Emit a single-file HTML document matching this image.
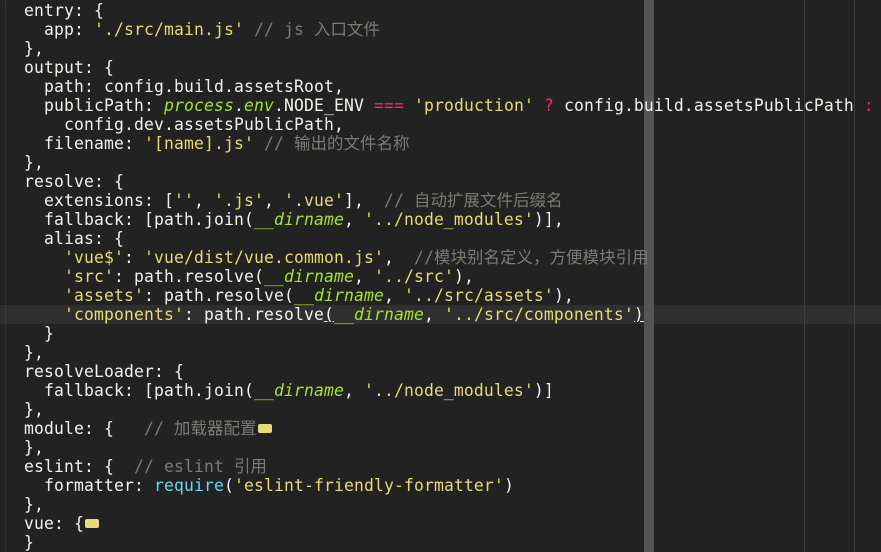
<!DOCTYPE html>
<html><head><meta charset="utf-8"><style>
html,body{margin:0;padding:0;background:#222222;width:881px;height:552px;overflow:hidden}
#ed{position:relative;width:881px;height:552px;font-family:"DejaVu Sans Mono","Noto Sans CJK SC",monospace;font-size:16.4px;letter-spacing:0.13px;color:#f2f2ec}
.l{position:absolute;left:24px;height:19px;line-height:19px;white-space:pre;margin-top:1px}
.s{color:#e6db74}.c{color:#7c7c74}.k{color:#f92672}.g{color:#a6e22e;font-style:italic}.b{color:#66d9ef}
.hl{position:absolute;left:0;width:881px;top:305px;height:19px;background:#2f2f2f}
.bar{position:absolute;left:644px;top:0;width:10px;height:552px;background:#555}
.v{position:absolute;top:0;width:1px;height:552px;background:#3f3f3f}
.dot{position:absolute;left:5px;top:0;height:552px;border-left:1px dotted #444}
.f{display:inline-block;width:14px;height:9px;background:#e6db74;border-radius:2px;vertical-align:middle;position:relative;top:-1px;margin-left:1px}
.u{text-decoration:underline}
</style></head><body><div id="ed">
<div class="hl"></div>
<div class="dot"></div>
<div class="bar"></div>
<div class="v" style="left:804px"></div>
<div class="v" style="left:854px"></div>
<div class="l" style="top:0px">entry: {</div>
<div class="l" style="top:19px">  app: <span class="s">'./src/main.js'</span> <span class="c">// js 入口文件</span></div>
<div class="l" style="top:38px">},</div>
<div class="l" style="top:57px">output: {</div>
<div class="l" style="top:76px">  path: config.build.assetsRoot,</div>
<div class="l" style="top:95px">  publicPath: <span class="g">process</span>.<span class="g">env</span>.NODE_ENV <span class="k">===</span> <span class="s">'production'</span> <span class="k">?</span> config.build.assetsPublicPath <span class="k">:</span></div>
<div class="l" style="top:114px">    config.dev.assetsPublicPath,</div>
<div class="l" style="top:133px">  filename: <span class="s">'[name].js'</span> <span class="c">// 输出的文件名称</span></div>
<div class="l" style="top:152px">},</div>
<div class="l" style="top:171px">resolve: {</div>
<div class="l" style="top:190px">  extensions: [<span class="s">''</span>, <span class="s">'.js'</span>, <span class="s">'.vue'</span>],  <span class="c">// 自动扩展文件后缀名</span></div>
<div class="l" style="top:209px">  fallback: [path.join(<span class="g">__dirname</span>, <span class="s">'../node_modules'</span>)],</div>
<div class="l" style="top:228px">  alias: {</div>
<div class="l" style="top:247px">    <span class="s">'vue$'</span>: <span class="s">'vue/dist/vue.common.js'</span>,  <span class="c">//模块别名定义，方便模块引用</span></div>
<div class="l" style="top:266px">    <span class="s">'src'</span>: path.resolve(<span class="g">__dirname</span>, <span class="s">'../src'</span>),</div>
<div class="l" style="top:285px">    <span class="s">'assets'</span>: path.resolve(<span class="g">__dirname</span>, <span class="s">'../src/assets'</span>),</div>
<div class="l" style="top:304px">    <span class="s">'components'</span>: path.resolve<span class="u">(</span><span class="g">__dirname</span>, <span class="s">'../src/components'</span><span class="u">)</span></div>
<div class="l" style="top:323px">  }</div>
<div class="l" style="top:342px">},</div>
<div class="l" style="top:361px">resolveLoader: {</div>
<div class="l" style="top:380px">  fallback: [path.join(<span class="g">__dirname</span>, <span class="s">'../node_modules'</span>)]</div>
<div class="l" style="top:399px">},</div>
<div class="l" style="top:418px">module: {   <span class="c">// 加载器配置</span><span class="f"></span></div>
<div class="l" style="top:437px">},</div>
<div class="l" style="top:456px">eslint: {  <span class="c">// eslint 引用</span></div>
<div class="l" style="top:475px">  formatter: <span class="b">require</span>(<span class="s">'eslint-friendly-formatter'</span>)</div>
<div class="l" style="top:494px">},</div>
<div class="l" style="top:513px">vue: {<span class="f"></span></div>
<div class="l" style="top:532px">}</div>
</div></body></html>
